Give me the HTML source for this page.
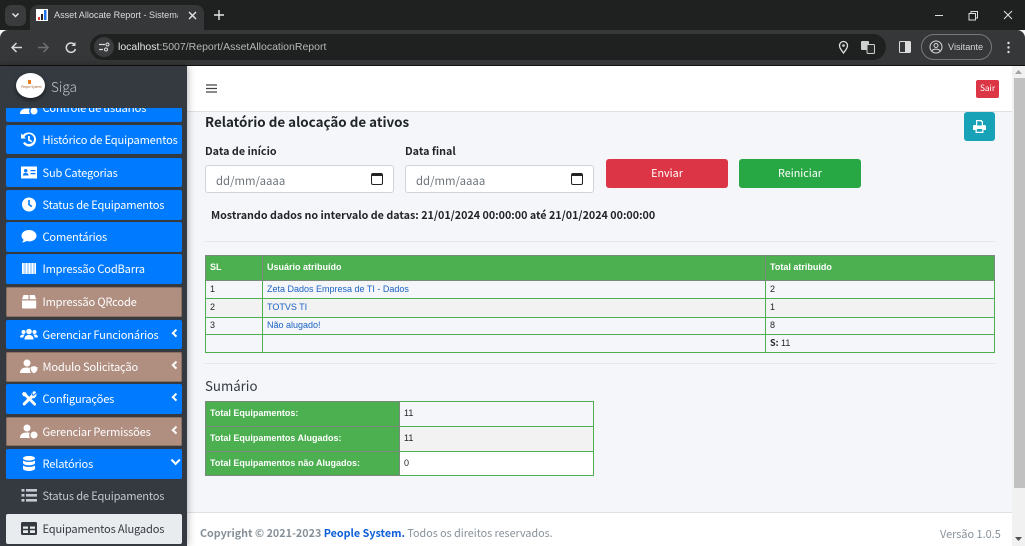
<!DOCTYPE html>
<html lang="pt"><head><meta charset="utf-8"><title>Asset Allocate Report</title>
<style>
*{box-sizing:border-box}
html,body{margin:0;padding:0;width:1025px;height:546px;overflow:hidden;background:#f4f6f9}
body{position:relative;font-family:"Noto Sans CJK JP","Liberation Sans",sans-serif;color:#212529}
.a{position:absolute}
.t{position:absolute;white-space:nowrap;line-height:16px}
.side{position:absolute;left:0;top:66px;width:187px;height:480px;background:#343a40;overflow:hidden;box-shadow:0 0 8px rgba(0,0,0,.35);z-index:5}
.it{position:absolute;left:6px;width:175.5px;height:29.5px;border-radius:2px;background:#007bff;color:#fff;font-size:11.1px;letter-spacing:-.17px;line-height:30.5px;padding-left:36.5px;white-space:nowrap}
.it.b{background:#b08e80;box-shadow:inset 0 0 0 1px #8b7064}
.it.n{background:none;color:#c2c7d0}
.it.w{background:#e9ecef;color:#343a40}
.it svg{position:absolute;left:14px;top:6px;width:18px;height:17px;fill:#fff}
.it.n svg{fill:#c2c7d0}.it.w svg{fill:#343a40}
.it i{position:absolute;right:3.500px;top:10px;width:5.500px;height:5.500px;border-left:2px solid #fff;border-bottom:2px solid #fff;transform:rotate(45deg)}
.it i.d{right:3px;top:8px;transform:rotate(-45deg);width:6.500px;height:6.500px}
table{position:absolute;border-collapse:collapse;font-family:"Liberation Sans",sans-serif;font-size:9px;table-layout:fixed}
td,th{border:1px solid #4caf50;padding:0 4px 2px;text-align:left;overflow:hidden;white-space:nowrap}
th,td.h{background:#4caf50;color:#fff;font-weight:bold;border-color:#7a8a7a}
td a{color:#1a62c5}
.in{position:absolute;top:165px;height:28px;background:#fff;border:1px solid #ced4da;border-radius:3px;font-size:11.350px;color:#6c757d;line-height:30px;padding-left:10px}
.cal{position:absolute;right:10px;top:7px;width:12px;height:12px;border:1.700px solid #222;border-top-width:3px;border-radius:2px}
.btn{position:absolute;top:159px;width:122px;height:28.500px;border-radius:3px;color:#fff;font-size:10.800px;line-height:28px;text-align:center}
hr{position:absolute;margin:0;border:0;height:1px;background:#e6e8ec}
</style></head><body>

<!-- browser chrome -->
<div class="a" style="left:0;top:0;width:1025px;height:30px;background:#1f2020"></div>
<div class="a" style="left:5px;top:5px;width:21px;height:21px;border-radius:6px;background:#3a3b3c"></div>
<svg class="a" style="left:11px;top:12px" width="9" height="7"><path d="M1.500 1.500 4.500 4.500 7.500 1.500" fill="none" stroke="#e3e3e3" stroke-width="1.500"/></svg>
<div class="a" style="left:30px;top:5px;width:174px;height:25px;background:#353738;border-radius:8px 8px 0 0"></div>
<div class="a" style="left:36px;top:9px;width:12px;height:12px;background:#fff"></div>
<svg class="a" style="left:36px;top:9px" width="12" height="12"><rect x="2" y="8" width="2" height="3" fill="#e53935"/><rect x="5" y="5" width="2" height="6" fill="#222"/><rect x="8" y="1" width="2.500" height="10" fill="#1e73e8"/></svg>
<div class="t" style="left:54px;top:8px;font:9.100px/14px 'Liberation Sans',sans-serif;color:#dcdcdc;width:124px;overflow:hidden">Asset Allocate Report - Sistema</div>
<svg class="a" style="left:188px;top:11px" width="9" height="9"><path d="M1 1 8 8M8 1 1 8" stroke="#e6e6e6" stroke-width="1.400"/></svg>
<svg class="a" style="left:214px;top:10px" width="10" height="10"><path d="M5 0V10M0 5H10" stroke="#e6e6e6" stroke-width="1.400"/></svg>
<svg class="a" style="left:930px;top:9px" width="85" height="12"><path d="M5 6.500H13" stroke="#ddd"/><path d="M39 4.500h6.500v6.500h-6.500zM41 4.500V2.500h6.500v6.500h-2" fill="none" stroke="#ddd"/><path d="M74 2 82 10M82 2 74 10" stroke="#ddd" stroke-width="1.100"/></svg>

<div class="a" style="left:0;top:30px;width:1025px;height:35px;background:#353738;border-radius:8px 8px 0 0"></div>
<div class="a" style="left:0;top:65px;width:1025px;height:1px;background:#111"></div>
<svg class="a" style="left:10px;top:40px" width="70" height="15"><path d="M2 7.500H12M6.500 3 2 7.500 6.500 12" fill="none" stroke="#d8d8d8" stroke-width="1.500"/><path d="M28 7.500H38M33.500 3 38 7.500 33.500 12" fill="none" stroke="#6f7072" stroke-width="1.500"/><path d="M64.500 4.500A4.700 4.700 0 1 0 65.500 9" fill="none" stroke="#d8d8d8" stroke-width="1.500"/><path d="M65.500 2V6H61.500" fill="#d8d8d8"/></svg>
<div class="a" style="left:90px;top:34px;width:796px;height:26px;border-radius:13px;background:#1f2020"></div>
<div class="a" style="left:94px;top:37px;width:20px;height:20px;border-radius:10px;background:#3a3b3c"></div>
<svg class="a" style="left:98px;top:42px" width="12" height="10"><path d="M1 2.500H7M1 7.500H5" stroke="#ddd" stroke-width="1.300"/><circle cx="9.500" cy="2.500" r="1.500" fill="none" stroke="#ddd"/><circle cx="8" cy="7.500" r="1.500" fill="none" stroke="#ddd"/></svg>
<div class="t" style="left:118px;top:40px;font:10.500px/14px 'Liberation Sans',sans-serif;color:#e4e4e4">localhost<span style="color:#b5b7b9">:5007/Report/AssetAllocationReport</span></div>
<svg class="a" style="left:837px;top:40px" width="13" height="14"><path d="M6.500 13C3.500 9 2.500 7.500 2.500 5.500a4 4 0 0 1 8 0C10.500 7.500 9.500 9 6.500 13z" fill="none" stroke="#ddd" stroke-width="1.300"/><circle cx="6.500" cy="5.500" r="1.300" fill="#ddd"/></svg>
<svg class="a" style="left:861px;top:41px" width="14" height="13"><rect x="0" y="0" width="8" height="9" rx="1" fill="#cfcfcf"/><rect x="6" y="3.500" width="7.500" height="9" rx="1" fill="#2a2b2c" stroke="#cfcfcf"/></svg>
<svg class="a" style="left:899px;top:41px" width="12" height="12"><rect x=".5" y=".5" width="11" height="11" rx="1" fill="none" stroke="#ddd"/><rect x="6" y="1" width="5" height="10" fill="#ddd"/></svg>
<div class="a" style="left:921px;top:34px;width:71px;height:26px;border-radius:13px;border:1px solid #77797b"></div>
<svg class="a" style="left:929px;top:40px" width="14" height="14"><circle cx="7" cy="7" r="6" fill="none" stroke="#ddd"/><circle cx="7" cy="5.500" r="2" fill="none" stroke="#ddd"/><path d="M3 11c1-2.500 7-2.500 8 0" fill="none" stroke="#ddd"/></svg>
<div class="t" style="left:948px;top:40px;font:9.200px/14px 'Liberation Sans',sans-serif;color:#d6d6d6">Visitante</div>
<svg class="a" style="left:1006px;top:41px" width="5" height="13"><circle cx="2.500" cy="2" r="1.200" fill="#ddd"/><circle cx="2.500" cy="6.500" r="1.200" fill="#ddd"/><circle cx="2.500" cy="11" r="1.200" fill="#ddd"/></svg>

<!-- sidebar -->
<div class="side">
  <div class="it" style="top:26.500px"><svg viewBox="0 0 18 17"><circle cx="7" cy="4" r="3.500"/><path d="M0 15c0-4 3-5.500 7-5.500 1.200 0 2 .1 2.800.4-.8 1-1 3.500.2 5.100z"/><circle cx="14" cy="12" r="3.500"/></svg>Controle de usuários</div>
  <div class="it" style="top:58.500px"><svg viewBox="0 0 18 17"><path d="M9 1.500a7 7 0 1 1-6 10.500l2-1a5 5 0 1 0-.5-5L6 7.500H1V2.500L3 4A7 7 0 0 1 9 1.500z"/><path d="M8 5h1.800v3.500l2.500 1.500-.9 1.400L8 9.500z"/></svg>Histórico de Equipamentos</div>
  <div class="it" style="top:91.500px"><svg viewBox="0 0 18 17"><path fill-rule="evenodd" d="M1 2.500h16v12H1zM10.500 6v1.200h5V6zM10.500 9v1.200h5V9zM3 11.500h5.500C8.500 9.500 7.500 9 5.700 9S3 9.500 3 11.500z"/><circle cx="5.700" cy="6.700" r="1.700" fill="#007bff"/></svg>Sub Categorias</div>
  <div class="it" style="top:124px"><svg viewBox="0 0 18 17"><path fill-rule="evenodd" d="M9 1.500a7 7 0 1 1 0 14 7 7 0 0 1 0-14zM8.200 4v5l3.200 2.200.9-1.300-2.500-1.700V4z"/></svg>Status de Equipamentos</div>
  <div class="it" style="top:156px"><svg viewBox="0 0 18 17"><path d="M9 2c4 0 7.500 2.400 7.500 5.700S13 13.400 9 13.400c-1 0-1.900-.1-2.700-.4-1 .8-2.500 1.500-4.500 1.500 1-.9 1.600-2 1.800-2.800C2.300 10.700 1.500 9.300 1.500 7.700 1.500 4.400 5 2 9 2z"/></svg>Comentários</div>
  <div class="it" style="top:188px"><svg viewBox="0 0 18 17"><rect x="2" y="3" width="14" height="11" fill-opacity=".72"/><path d="M2 3h1.500v11H2zM6 3h1v11H6zM9 3h1v11H9zM12 3h1v11h-1zM15 3h1v11h-1z"/></svg>Impressão CodBarra</div>
  <div class="it b" style="top:221px"><svg viewBox="0 0 18 17"><path d="M3.500 2h5v4.200H2zM9.700 2h5l1.500 4.200H9.700zM2 7.500h14.200V14.500a1 1 0 0 1-1 1H3a1 1 0 0 1-1-1z"/></svg>Impressão QRcode</div>
  <div class="it" style="top:253.500px"><svg viewBox="0 0 18 17"><circle cx="9" cy="5.500" r="2.800"/><circle cx="3.500" cy="6" r="2"/><circle cx="14.500" cy="6" r="2"/><path d="M4.500 13.500c0-3.500 2-4.500 4.500-4.500s4.500 1 4.500 4.500zM0 11.500c0-2 1.200-3 3.500-3 .5 0 .9.100 1.200.2-.8.700-1.300 1.600-1.400 2.800zM18 11.500c0-2-1.200-3-3.500-3-.5 0-.9.100-1.200.2.800.700 1.300 1.600 1.400 2.800z"/></svg>Gerenciar Funcionários<i></i></div>
  <div class="it b" style="top:286px"><svg viewBox="0 0 18 17"><circle cx="7" cy="5" r="3.500"/><path d="M0 15c0-4 3-5.500 7-5.500 1.200 0 2 .1 2.800.4l.2 3.100.8 2z"/><path d="M14 8l3.500 1.300c0 3-1 5-3.500 6-2.500-1-3.500-3-3.500-6z"/></svg>Modulo Solicitação<i></i></div>
  <div class="it" style="top:318px"><svg viewBox="0 0 18 17"><path d="M3.500 2 2 3.500 3 6 5 6.500 14 15.500a1.500 1.500 0 0 0 2-2L7 4.500 6 2.500z"/><path d="M16 2.500 13.700 4.800 12.500 4 12.700 2C14 .8 15.500 1.200 16 2.500zM11.500 2.500 11 5 3 13a1.500 1.500 0 0 0 2 2.200L12 8.500l2.500-.5C16 7 16.800 5.500 16.500 3.500L14 5.800 11.800 5.200z"/></svg>Configurações<i></i></div>
  <div class="it b" style="top:350.500px"><svg viewBox="0 0 18 17"><circle cx="7" cy="5" r="3.500"/><path d="M0 15c0-4 3-5.500 7-5.500 1.200 0 2 .1 2.800.4-.8 1-1 3.500.2 5.100z"/><circle cx="14" cy="12" r="3.500"/></svg>Gerenciar Permissões<i></i></div>
  <div class="it" style="top:383px"><svg viewBox="0 0 18 17"><path d="M9 1c3.500 0 6 1 6 2.300S12.500 5.600 9 5.600 3 4.600 3 3.300 5.500 1 9 1zM3 5.500c1.300 1 3.500 1.400 6 1.400s4.700-.4 6-1.400V8c0 1.300-2.500 2.300-6 2.300S3 9.300 3 8zM3 10.500c1.300 1 3.500 1.400 6 1.400s4.700-.4 6-1.400v3c0 1.300-2.500 2.500-6 2.500s-6-1.200-6-2.500z"/></svg>Relatórios<i class="d"></i></div>
  <div class="it n" style="top:415px"><svg viewBox="0 0 18 17"><path d="M1.500 2h3v2.600h-3zM6 2h11v2.600H6zM1.500 7h3v2.600h-3zM6 7h11v2.600H6zM1.500 12h3v2.600h-3zM6 12h11v2.600H6z"/></svg>Status de Equipamentos</div>
  <div class="it w" style="top:448px;height:30px"><svg viewBox="0 0 18 17"><path fill-rule="evenodd" d="M2.500 2h13A1.500 1.500 0 0 1 17 3.500v10a1.500 1.500 0 0 1-1.500 1.500h-13A1.500 1.500 0 0 1 1 13.500v-10A1.500 1.500 0 0 1 2.500 2zM3 6.500v2.300h5V6.500zM10 6.500v2.300h5V6.500zM3 10.300V13h5v-2.700zM10 10.300V13h5v-2.700z"/></svg>Equipamentos Alugados</div>
  <div class="a" style="left:0;top:0;width:187px;height:41.500px;background:#343a40"></div>
  <div class="a" style="left:16px;top:7px;width:29px;height:25px;border-radius:50%;background:#fff;box-shadow:0 2px 5px rgba(0,0,0,.5)"></div>
  <div class="a" style="left:28px;top:14px;width:3px;height:4px;background:#e67e22"></div>
  <div class="t" style="left:21px;top:19px;font-size:3px;line-height:4px;color:#a05a20">People System</div>
  <div class="t" style="left:51px;top:11px;font-size:13.600px;line-height:18px;color:#c2c7d0;font-weight:300">Siga</div>
</div>

<!-- top nav -->
<div class="a" style="left:187px;top:66px;width:825px;height:46px;background:#fff;border-bottom:1px solid #dee2e6"></div>
<svg class="a" style="left:206px;top:84px" width="11" height="9"><path d="M0 1H11M0 4.500H11M0 8H11" stroke="#444" stroke-width="1.200"/></svg>
<div class="a" style="left:976px;top:80px;width:23px;height:18px;border-radius:2px;background:#dc3545;color:#fff;font-size:8.300px;line-height:17px;text-align:center">Sair</div>

<!-- content -->
<div class="t" style="left:205px;top:112px;font-size:13.400px;line-height:18px;font-weight:700">Relatório de alocação de ativos</div>
<div class="a" style="left:964px;top:112px;width:31px;height:29px;border-radius:3px;background:#17a2b8"></div>
<svg class="a" style="left:973px;top:120px" width="13" height="13" viewBox="0 0 13 13"><path fill="#fff" fill-rule="evenodd" d="M3 0h5.500L10 1.500V5h1.500A1.500 1.500 0 0 1 13 6.500V10h-2.500v3h-8v-3H0V6.500A1.500 1.500 0 0 1 1.500 5H3zM4.200 1.200V5.500h4.600V2.500L7.800 1.200zM3.800 9v2.800h5.400V9z"/></svg>
<div class="t" style="left:205px;top:144px;font-size:10.750px;font-weight:700">Data de início</div>
<div class="t" style="left:405px;top:144px;font-size:10.750px;font-weight:700">Data final</div>
<div class="in" style="left:205px;width:189px">dd/mm/aaaa<span class="cal"></span></div>
<div class="in" style="left:405px;width:189px">dd/mm/aaaa<span class="cal"></span></div>
<div class="btn" style="left:606px;background:#dc3545">Enviar</div>
<div class="btn" style="left:739px;background:#28a745">Reiniciar</div>
<div class="t" style="left:211px;top:208px;font-size:10.730px;font-weight:700">Mostrando dados no intervalo de datas: 21/01/2024 00:00:00 até 21/01/2024 00:00:00</div>
<hr style="left:205px;top:241px;width:790px">

<table style="left:205px;top:255px;width:789px">
<colgroup><col style="width:57px"><col style="width:503px"><col style="width:229px"></colgroup>
<tr style="height:25px"><th>SL</th><th>Usuário atribuído</th><th>Total atribuído</th></tr>
<tr style="height:18px"><td>1</td><td><a>Zeta Dados Empresa de TI - Dados</a></td><td>2</td></tr>
<tr style="height:18.500px;background:#f2f2f2"><td>2</td><td><a>TOTVS TI</a></td><td>1</td></tr>
<tr style="height:17px"><td>3</td><td><a>Não alugado!</a></td><td>8</td></tr>
<tr style="height:18px"><td></td><td></td><td><b style="font-family:'Noto Sans CJK JP',sans-serif">S:</b> 11</td></tr>
</table>
<hr style="left:205px;top:363px;width:790px">
<div class="t" style="left:205px;top:377px;font-size:13.250px;line-height:18px;color:#343a40">Sumário</div>
<table style="left:205px;top:401px;width:388px">
<colgroup><col style="width:194px"><col style="width:194px"></colgroup>
<tr style="height:25px"><td class="h">Total Equipamentos:</td><td>11</td></tr>
<tr style="height:25px;background:#f2f2f2"><td class="h">Total Equipamentos Alugados:</td><td>11</td></tr>
<tr style="height:24px;background:#fff"><td class="h">Total Equipamentos não Alugados:</td><td>0</td></tr>
</table>

<!-- footer -->
<div class="a" style="left:187px;top:512px;width:825px;height:34px;background:#fff;border-top:1px solid #dee2e6"></div>
<div class="t" style="left:200px;top:526px;font-size:10.760px;color:#869099"><b>Copyright © 2021-2023 <span style="color:#0b5ed7">People System.</span></b> Todos os direitos reservados.</div>
<div class="t" style="left:940px;top:526px;font-size:10.900px;color:#869099">Versão 1.0.5</div>

<!-- scrollbar -->
<div class="a" style="left:1012px;top:66px;width:13px;height:480px;background:#f1f1f1"></div>
<div class="a" style="left:1014px;top:78px;width:11px;height:410px;background:#c1c1c1"></div>
<svg class="a" style="left:1014px;top:69px" width="9" height="6"><path d="M4.500 1 8 5H1z" fill="#a3a3a3"/></svg>
<svg class="a" style="left:1014px;top:536px" width="9" height="6"><path d="M4.500 5 8 1H1z" fill="#505050"/></svg>
</body></html>
